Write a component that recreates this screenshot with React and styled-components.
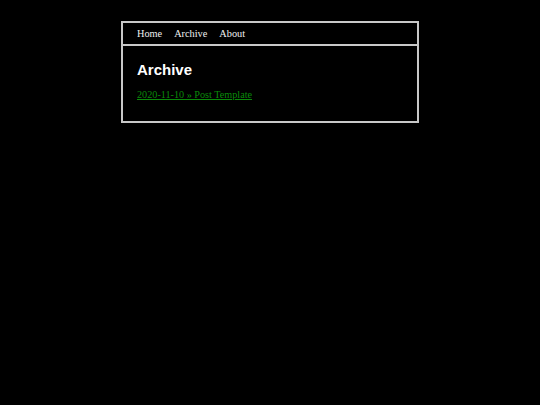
import React from "react";
import styled, { createGlobalStyle } from "styled-components";

const Global = createGlobalStyle`
  html, body { margin: 0; padding: 0; background: #000; }
  body { font-family: "Liberation Serif", serif; color: #fff; }
`;

const Page = styled.div`
  padding-top: 21px;
  display: flex;
  justify-content: center;
`;

const Box = styled.div`
  width: 294px;
  border: 2px solid #c8c8c8;
  background: #000;
`;

const Nav = styled.nav`
  display: flex;
  gap: 12px;
  height: 21px;
  align-items: center;
  padding: 0 14px;
  border-bottom: 2px solid #c8c8c8;
`;

const NavLink = styled.a`
  font-family: "Liberation Serif", serif;
  font-size: 10.3px;
  color: #f0f0f0;
  text-decoration: none;
`;

const Main = styled.main`
  padding: 15px 14px 19px;
`;

const Title = styled.h1`
  margin: 0 0 5px;
  font-family: "Liberation Sans", Arial, sans-serif;
  font-size: 15px;
  line-height: 18px;
  font-weight: bold;
  color: #fff;
`;

const PostLink = styled.a`
  display: inline-block;
  font-family: "Liberation Serif", serif;
  font-size: 10.2px;
  line-height: 12px;
  color: #0a8a0a;
  text-decoration: underline;
`;

export default function App() {
  return (
    <>
      <Global />
      <Page>
        <Box>
          <Nav>
            <NavLink href="#">Home</NavLink>
            <NavLink href="#">Archive</NavLink>
            <NavLink href="#">About</NavLink>
          </Nav>
          <Main>
            <Title>Archive</Title>
            <PostLink href="#">2020-11-10 » Post Template</PostLink>
          </Main>
        </Box>
      </Page>
    </>
  );
}
